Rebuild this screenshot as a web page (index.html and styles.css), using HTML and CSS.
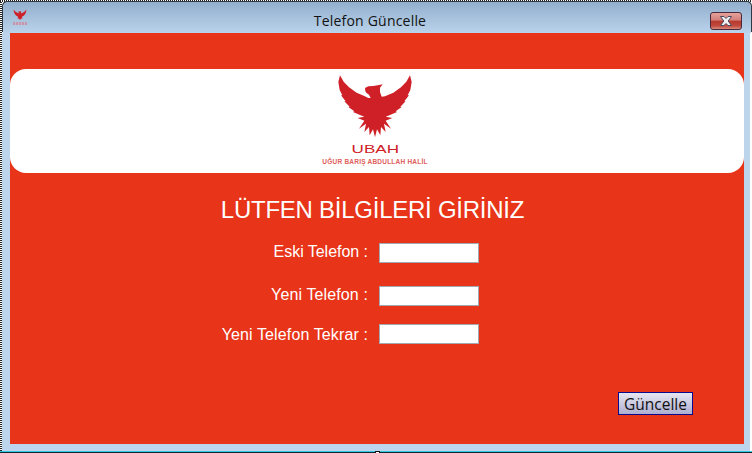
FILE: index.html
```html
<!DOCTYPE html>
<html lang="tr">
<head>
<meta charset="utf-8">
<title>Telefon Güncelle</title>
<link rel="stylesheet" href="styles.css">
</head>
<body>
<svg class="defs" width="0" height="0" aria-hidden="true">
  <symbol id="eagle" viewBox="0 0 240 210">
    <path fill="#cf2027" d="M90 48 L100 43 L115 42 L128 40 L143 37 L135 47 L135 60 L140 74 L150 73 L175 62 L198 46 L214 29 L225 10 L230 30 L226 54 L218 70 L222 70 L208 88 L212 88 L196 104 L200 105 L182 118 L186 120 L165 129 L152 134 L172 138 L152 146 L168 170 L147 155 L152 180 L138 165 L136 190 L126 172 L120 196 L114 172 L104 190 L102 165 L88 180 L93 155 L72 170 L88 146 L68 138 L88 134 L75 129 L54 120 L58 118 L40 105 L44 104 L28 88 L32 88 L18 70 L22 70 L14 54 L10 30 L15 10 L26 29 L42 46 L65 62 L88 72 L100 78 L107 78 L102 68 L94 62 L91 58 Z"/>
  </symbol>
</svg>
<div class="window">
  <header class="titlebar">
    <span class="app-icon">
      <svg class="app-eagle" width="14" height="12"><use href="#eagle"/></svg>
      <span class="app-mark"></span>
    </span>
    <span class="title">Telefon Güncelle</span>
    <button class="close" type="button" aria-label="Kapat">
      <svg width="14" height="10" viewBox="0 0 14 10"><path d="M1.5 .5 L5 .5 L7 2.5 L9 .5 L12.5 .5 L9.2 5 L12.5 9.5 L9 9.5 L7 7.5 L5 9.5 L1.5 9.5 L4.8 5 Z" fill="#f1f1f3" stroke="#4b4a5c" stroke-width="1"/></svg>
    </button>
  </header>
  <main class="content">
    <div class="banner">
      <svg class="eagle" width="80" height="70"><use href="#eagle"/></svg>
      <div class="brand">UBAH</div>
      <div class="brand-sub">UĞUR BARIŞ ABDULLAH HALİL</div>
    </div>
    <h1 class="heading">LÜTFEN BİLGİLERİ GİRİNİZ</h1>
    <form class="form">
      <label class="label row-one" for="a">Eski Telefon :</label>
      <input class="field" id="a" type="text">
      <label class="label" for="b">Yeni Telefon :</label>
      <input class="field" id="b" type="text">
      <label class="label row-three" for="c">Yeni Telefon Tekrar :</label>
      <input class="field" id="c" type="text">
    </form>
    <div class="actions">
      <button class="submit" type="button">Güncelle</button>
    </div>
  </main>
  <div class="notch"></div>
</div>
</body>
</html>
```
FILE: styles.css
```css
html, body {
  margin: 0;
  padding: 0;
  width: 752px;
  height: 453px;
  overflow: hidden;
  background: #fff;
}
.defs { position: absolute; }
.window {
  position: relative;
  isolation: isolate;
  box-sizing: border-box;
  width: 752px;
  height: 453px;
  padding: 2px 0 0 2px;
  background-color: #fff;
  background-image:
    repeating-linear-gradient(90deg, #222 0 1px, #fff 1px 2px),
    repeating-linear-gradient(0deg, #222 0 1px, #fff 1px 2px);
  background-size: 100% 2px, 2px 100%;
  background-repeat: no-repeat;
  box-shadow: inset 0 -1px 0 #0a2a33, inset 0 -2px 0 #36c8e0;
  display: flex;
  flex-direction: column;
}
.window::before {
  content: "";
  position: absolute;
  left: 2px;
  right: 2px;
  top: 33px;
  bottom: 2px;
  background: #bcd4ec;
  z-index: -1;
}
.titlebar {
  position: relative;
  flex: none;
  height: 31px;
  margin: 0 1px;
  display: flex;
  align-items: center;
  justify-content: center;
  border-radius: 5px 5px 0 0;
  background: linear-gradient(#93afcd, #bad3eb);
  box-shadow: -1px -1px 0 #2d3a45, 1px -1px 0 #2d3a45;
}
.title {
  font: 14px "Open Sans", "Noto Sans", sans-serif;
  letter-spacing: .2px;
  color: #111;
  margin: 6px 14px 0 0;
}
.app-icon {
  position: absolute;
  left: 9px;
  top: 7px;
  width: 16px;
  display: flex;
  flex-direction: column;
  align-items: center;
}
.app-mark {
  width: 14px;
  height: 3px;
  margin-top: 1px;
  opacity: .55;
  background: repeating-linear-gradient(90deg, #d76e80 0 2px, #dfa9b6 2px 3px);
}
.close {
  position: absolute;
  right: 9px;
  top: 10px;
  width: 32px;
  height: 18px;
  padding: 0;
  display: flex;
  align-items: center;
  justify-content: center;
  border: 1px solid #4a2a3a;
  border-radius: 3px;
  background: linear-gradient(#e6a29c 0, #d27f79 45%, #b8392d 50%, #c0493d 80%, #d98a7e 100%);
}
.content {
  flex: none;
  box-sizing: border-box;
  width: 734px;
  height: 411px;
  margin-left: 8px;
  padding-top: 36px;
  background: #e83418;
}
.banner {
  height: 104px;
  border-radius: 16px;
  background: #fff;
  display: flex;
  flex-direction: column;
  align-items: center;
  padding: 3px 4px 0 0;
  box-sizing: border-box;
}
.eagle { display: block; flex: none; }
.brand {
  margin-top: 2px;
  font: 11px/10px "Liberation Sans", sans-serif;
  color: #cf2027;
  transform: scaleX(1.55);
}
.brand-sub {
  margin-top: 4px;
  font: bold 6.5px/8px "Liberation Sans", sans-serif;
  color: #e0605c;
  letter-spacing: .22px;
  white-space: nowrap;
}
.heading {
  margin: 23px 0 0 0;
  padding-right: 9px;
  font: normal 24px/28px "Liberation Sans", sans-serif;
  letter-spacing: -.25px;
  color: #fff;
  text-align: center;
}
.form {
  display: grid;
  grid-template-columns: 358px 100px;
  grid-template-rows: 20px 43px 38px;
  column-gap: 11px;
  margin-top: 19px;
  align-items: end;
}
.label {
  box-sizing: border-box;
  height: 20px;
  font: 16px/18px "Liberation Sans", sans-serif;
  letter-spacing: .12px;
  color: #fff;
  text-align: right;
}
.row-one { letter-spacing: -.03px; }
.row-three { padding-top: 2px; }
.field {
  box-sizing: border-box;
  width: 100px;
  height: 20px;
  margin: 0;
  padding: 0;
  border: 1px solid #a3a8ae;
  background: #fff;
}
.actions {
  display: flex;
  justify-content: flex-end;
  margin: 48px 51px 0 0;
}
.submit {
  box-sizing: border-box;
  width: 75px;
  height: 23px;
  padding: 0;
  border: 1px solid #0a0a8c;
  border-radius: 0;
  background: linear-gradient(#e6e6f2, #aeaed0);
  font: 15.5px/20px "Open Sans", "Noto Sans", sans-serif;
  color: #111;
}
.notch {
  position: absolute;
  left: 375px;
  bottom: 0;
  width: 5px;
  height: 2px;
  background: #fff;
  border: 1px solid #111;
  border-bottom: 0;
  box-sizing: border-box;
}
```
